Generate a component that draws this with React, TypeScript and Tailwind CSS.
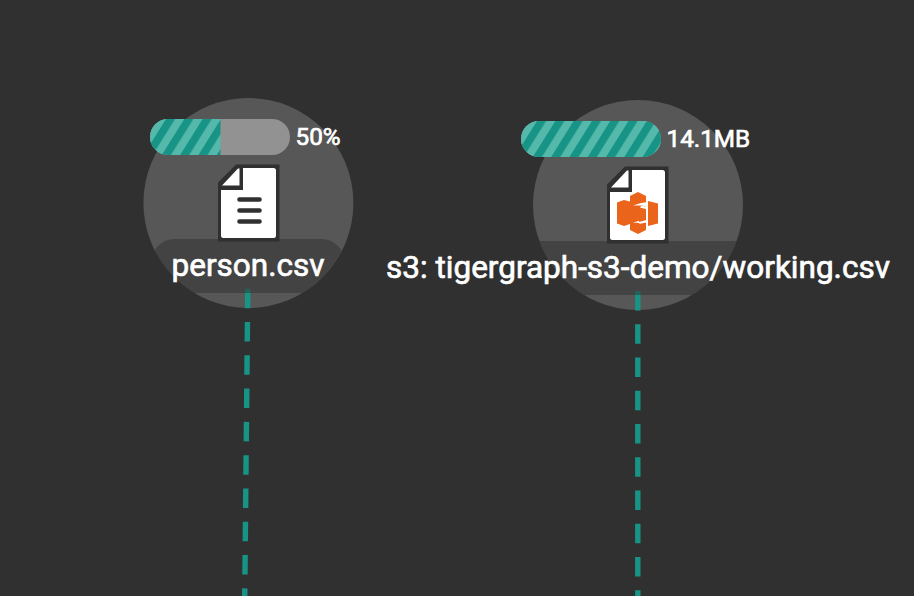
import type { ReactNode } from "react";

function Stripes({ id, width }: { id: string; width: number }) {
  return (
    <svg width={width} height="36" className="block">
      <defs>
        <pattern id={id} width="18.3" height="36" patternUnits="userSpaceOnUse" patternTransform="translate(16 0) skewX(-32)">
          <rect width="18.3" height="36" fill="#54b8ab" />
          <rect width="9.1" height="36" fill="#179486" />
        </pattern>
      </defs>
      <rect width={width} height="36" fill={`url(#${id})`} />
    </svg>
  );
}

function Progress({ id, fill, label }: { id: string; fill: number; label: string }) {
  return (
    <div className="flex items-center gap-[5.5px]">
      <div className="h-9 w-[140px] shrink-0 overflow-hidden rounded-full bg-[#929292]">
        <Stripes id={id} width={fill} />
      </div>
      <span className="text-[24.3px] leading-9 whitespace-nowrap text-white [-webkit-text-stroke:0.7px_white]">{label}</span>
    </div>
  );
}

function FileIcon({ children }: { children: ReactNode }) {
  return (
    <svg width="62" height="78" viewBox="0 0 62 78" className="block shrink-0">
      <path d="M18 0.5H61.5V77.5H0V18.5Z" fill="#303030" />
      <path d="M25 4H55.5Q58 4 58 6.5V71.5Q58 74 55.5 74H5.5Q3 74 3 71.5V26H25Z" fill="#fff" />
      <path d="M4 21.5L20 4.5H21.5V21.5Z" fill="#fff" />
      {children}
    </svg>
  );
}

interface NodeProps {
  place: string;
  barOffset: string;
  iconOffset: string;
  band: string;
  progress: ReactNode;
  icon: ReactNode;
  name: string;
}

function SourceNode({ place, barOffset, iconOffset, band, progress, icon, name }: NodeProps) {
  return (
    <div className={`absolute size-[210px] ${place}`}>
      <div className="absolute inset-0 flex flex-col items-center overflow-hidden rounded-full pt-[141px]">
        <div className={`h-[54px] shrink-0 bg-[#303030]/50 ${band}`} />
      </div>
      <div className="relative flex h-full flex-col items-center pt-[21px]">
        <div className={`self-start ${barOffset}`}>{progress}</div>
        <div className={`mt-[9px] ${iconOffset}`}>{icon}</div>
        <span className="mt-[5px] text-[31.5px] leading-[38px] whitespace-nowrap text-white [-webkit-text-stroke:0.7px_white]">{name}</span>
      </div>
    </div>
  );
}

export default function App() {
  return (
    <main className="relative h-[596px] w-[914px] overflow-hidden bg-[#303030] font-[Roboto,'Open_Sans',sans-serif]">
      <svg width="914" height="596" className="block" fill="none" stroke="#179486" strokeWidth="5.4">
        <circle cx="248.4" cy="203" r="105" fill="#575757" stroke="none" />
        <circle cx="638" cy="205" r="105" fill="#575757" stroke="none" />
        <path d="M247.8 288.7L244.7 600" strokeDasharray="19.5 13.8" />
        <path d="M637.8 291L637.8 600" strokeDasharray="19.5 13.75" />
      </svg>

      <SourceNode
        place="top-[98px] left-[143px]"
        barOffset="ml-[7px]"
        iconOffset="ml-[2px]"
        band="w-[194px] rounded-[24px]"
        progress={<Progress id="person-stripes" fill={70.5} label="50%" />}
        icon={
          <FileIcon>
            <path d="M21.5 35.5H41.5M21.5 46.5H41.5M21.5 57.5H41.5" stroke="#303030" strokeWidth="4.6" strokeLinecap="round" />
          </FileIcon>
        }
        name="person.csv"
      />
      <SourceNode
        place="top-[100px] left-[533px]"
        barOffset="-ml-3"
        iconOffset="ml-0"
        band="w-full"
        progress={<Progress id="bucket-stripes" fill={140} label="14.1MB" />}
        icon={
          <FileIcon>
            <path
              d="M10 36.5L17 34L23 35.5V30L31 26L39 30V37L33 38.2L39 41V64L31 68L23 64V58L17 60L10 57.5Z"
              fill="#eb641c"
            />
            <path d="M26 39.6L34 37L39.5 36.2V37.6L34 39L39.5 41.2V43.2L33 41.4L34.5 39.6ZM26 56.8L32 54.8V56L39.5 54V56.4L33 57.8L31 56.8Z" fill="#fff" />
            <path d="M41 35L51 37.5V57.5L41 60Z" fill="#eb641c" />
          </FileIcon>
        }
        name="s3: tigergraph-s3-demo/working.csv"
      />
    </main>
  );
}
